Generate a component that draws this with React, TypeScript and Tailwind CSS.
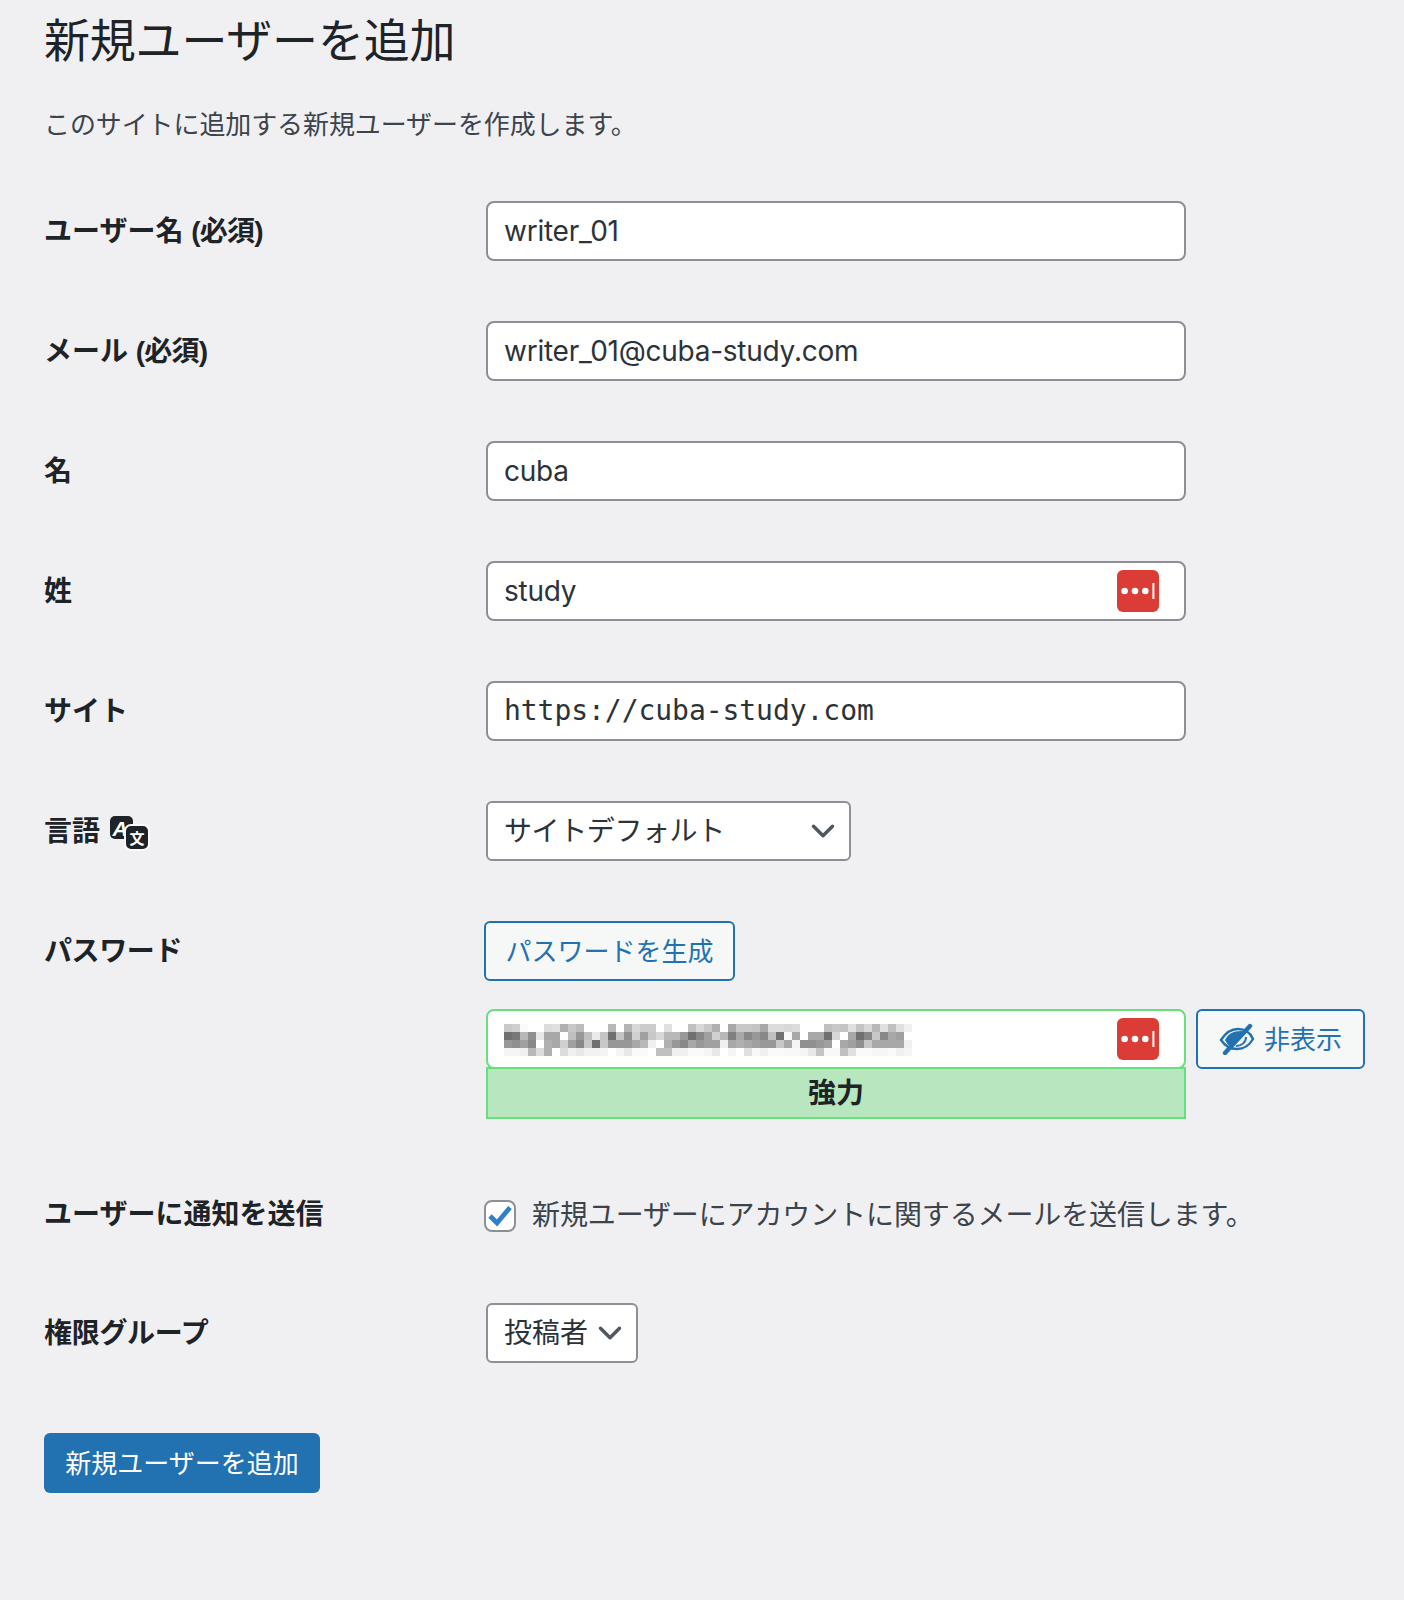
import type { ReactNode } from "react";
import { ChevronDown } from "lucide-react";

// blurred password: gray levels of the mosaic, 4 rows of 51 cells
const mosaic = [
  "c9 cf fa ff ff dc e0 b0 c8 bc ff ff ff b8 ff b4 d8 cc cc ff e0 ff ff c0 d8 c8 b0 ff a8 c8 c8 c4 a8 dc dc d8 dc ff ff ff c0 c8 c4 e0 c4 d8 b8 e0 c0 e0 f0",
  "70 78 b8 90 e8 a8 a8 ff c0 98 c0 ea c4 70 c4 90 d0 a0 c8 d8 b8 b8 98 70 88 a0 d0 b8 80 a8 88 98 88 c0 70 f8 a8 ff a8 a8 70 d8 ff a8 70 88 c8 88 a8 a0 ff",
  "98 90 a0 88 ff b0 a8 d0 a0 88 c8 70 c8 98 98 98 a8 b8 f0 ff b0 98 88 a8 98 a0 a0 f0 a8 b0 a8 a0 98 98 c8 a8 f4 90 90 98 a0 ff a8 a0 90 c8 a8 a8 a8 a8 f0",
  "f5 f5 f0 b8 dc b0 ff dc f0 e8 f2 f2 f4 ff f5 e8 fa fa ff c0 c0 f0 f0 fa fa f5 e8 ff f5 ff e0 f8 f0 fa fa f8 f8 f5 e8 c4 f8 f8 c0 e0 fa fa f6 f6 fa f0 f5",
];

function BlurredPassword() {
  return (
    <div className="flex flex-col mt-[2px]">
      {mosaic.map((row, i) => (
        <div key={i} className="flex">
          {row.split(" ").map((shade, j) => (
            <div key={j} className="w-[8px] h-[8px]" style={{ background: `#${shade}${shade}${shade}` }} />
          ))}
        </div>
      ))}
    </div>
  );
}

function ManagerIcon() {
  return (
    <svg width="42" height="42" viewBox="0 0 42 42">
      <rect width="42" height="42" rx="6" fill="#dc3c36" />
      <circle cx="7.6" cy="21" r="3.3" fill="#fff" />
      <circle cx="18" cy="21" r="3.3" fill="#fff" />
      <circle cx="28.3" cy="21" r="3.3" fill="#fff" />
      <rect x="35.4" y="13" width="2" height="16" fill="#fff" />
    </svg>
  );
}

function TranslateIcon() {
  return (
    <svg width="40" height="36" viewBox="0 0 40 36" className="ml-[10px] mt-[4px]">
      <rect x="0" y="0" width="23" height="23" rx="5" fill="#1d2327" />
      <text x="10" y="20" textAnchor="middle" fontSize="21" fontWeight="700" fontStyle="italic" fill="#fff" fontFamily="Liberation Sans, sans-serif">
        A
      </text>
      <rect x="15" y="9" width="24" height="25" rx="6" fill="#1d2327" stroke="#fafafa" strokeWidth="2" />
      <text x="27" y="28" textAnchor="middle" fontSize="15" fontWeight="700" fill="#fff" fontFamily="Noto Sans CJK JP, sans-serif">
        文
      </text>
    </svg>
  );
}

function HiddenIcon() {
  return (
    <svg width="36" height="32" viewBox="0 0 36 32" fill="none">
      <path d="M2 17 C7 9 13 6 19 6 C25 6 31 9 34 16 C30 23 24 26 18 26 C12 26 6 23 2 17Z" stroke="#2271b1" strokeWidth="2.4" />
      <path d="M6 17 C9 11 14 8 22 8 L25 9 L11 24 C9 22 7 19 6 17Z" fill="#2271b1" />
      <path d="M27 14 C27 19 23 23 17 23" stroke="#2271b1" strokeWidth="2" />
      <path d="M6 30 L31 3" stroke="#2271b1" strokeWidth="4.4" strokeLinecap="round" />
    </svg>
  );
}

function Field({ value, mono, manager }: { value: string; mono?: boolean; manager?: boolean }) {
  return (
    <div className="h-[60px] w-[700px] rounded-[8px] border-2 border-[#8c8f94] bg-white pl-[16px] pr-[25px] flex items-center justify-between text-[28px] text-[#2c3338]">
      <span className={mono ? "font-['DejaVu_Sans_Mono',monospace] tracking-[-0.05px]" : "tracking-[-0.25px]"}>{value}</span>
      {manager && <ManagerIcon />}
    </div>
  );
}

function SelectBox({ value, className }: { value: string; className: string }) {
  return (
    <div className={`${className} h-[60px] rounded-[6px] border-2 border-[#8c8f94] bg-white pl-[16px] pr-[7px] flex items-center justify-between text-[28px] text-[#2c3338]`}>
      <span>{value}</span>
      <ChevronDown className="w-[38px] h-[38px] text-[#50575e]" strokeWidth={2.2} />
    </div>
  );
}

function Label({ children, className = "pt-[2px]" }: { children: ReactNode; className?: string }) {
  return (
    <div className={`${className} w-[442px] shrink-0 flex items-center text-[28px] font-bold text-[#1d2327] font-['Liberation_Sans','Noto_Sans_CJK_JP',sans-serif]`}>
      {children}
    </div>
  );
}

function Row({ label, children }: { label: ReactNode; children: ReactNode }) {
  return (
    <div className="flex items-center h-[60px] mb-[60px]">
      <Label>{label}</Label>
      {children}
    </div>
  );
}

export default function App() {
  return (
    <div className="min-h-[1600px] bg-[#f0f0f2] pl-[44px] font-['Inter','Noto_Sans_CJK_JP',sans-serif] text-[#3c434a]">
      <h1 className="pt-[9px] text-[46px] leading-[62px] tracking-[-0.2px] text-[#1d2327]">新規ユーザーを追加</h1>
      <p className="mt-[36px] text-[26px] leading-[36px] tracking-[-0.1px]">このサイトに追加する新規ユーザーを作成します。</p>

      <div className="mt-[58px]">
        <Row label={<span className="whitespace-pre">ユーザー名 <span className="tracking-[-0.8px]">(必須)</span></span>}><Field value="writer_01" /></Row>
        <Row label={<span className="whitespace-pre">メール <span className="tracking-[-0.8px]">(必須)</span></span>}><Field value="writer_01@cuba-study.com" /></Row>
        <Row label="名"><Field value="cuba" /></Row>
        <Row label="姓"><Field value="study" manager /></Row>
        <Row label="サイト"><Field value="https://cuba-study.com" mono /></Row>
        <Row label={<><span>言語</span><TranslateIcon /></>}>
          <SelectBox value="サイトデフォルト" className="w-[365px] tracking-[-0.4px]" />
        </Row>

        {/* Password */}
        <div className="flex">
          <div className="h-[60px] flex items-center">
            <Label><span className="tracking-[-0.4px]">パスワード</span></Label>
          </div>
          <div>
            <button className="-ml-[2px] h-[60px] w-[251px] rounded-[6px] border-2 border-[#2271b1] bg-[#f6f7f7] text-[26px] text-[#2271b1]">
              パスワードを生成
            </button>
            <div className="mt-[28px] flex gap-[10px] items-start">
              <div className="w-[700px]">
                <div className="relative z-10 h-[60px] rounded-[8px] border-2 border-[#68de7c] bg-white pl-[16px] pr-[25px] flex items-center justify-between">
                  <BlurredPassword />
                  <ManagerIcon />
                </div>
                <div className="-mt-[2px] h-[52px] border-2 border-[#68de7c] bg-[#b8e6bf] flex items-center justify-center text-[28px] font-bold text-[#1d2327]">
                  強力
                </div>
              </div>
              <button className="h-[60px] w-[169px] rounded-[6px] border-2 border-[#2271b1] bg-[#f6f7f7] flex items-center justify-center gap-[9px] text-[26px] text-[#2271b1]">
                <HiddenIcon />
                <span>非表示</span>
              </button>
            </div>
          </div>
        </div>

        {/* Notification */}
        <div className="mt-[81px] flex items-center h-[32px]">
          <Label className="pb-[2px]">ユーザーに通知を送信</Label>
          <div className="-ml-[2px] w-[32px] h-[32px] rounded-[8px] border-2 border-[#8c8f94] bg-white flex items-center justify-center">
            <svg width="26" height="22" viewBox="0 0 26 22" fill="none">
              <path d="M3 11 L10 18 L23 2.5" stroke="#2f7fc9" strokeWidth="4.8" />
            </svg>
          </div>
          <span className="ml-[16px] text-[28px] -mt-[2px] tracking-[-0.12px]">新規ユーザーにアカウントに関するメールを送信します。</span>
        </div>

        <div className="mt-[71px] flex items-center h-[60px]">
          <Label><span className="tracking-[-0.3px]">権限グループ</span></Label>
          <SelectBox value="投稿者" className="w-[152px]" />
        </div>

        <button className="mt-[70px] h-[60px] w-[276px] rounded-[6px] bg-[#2271b1] text-[26px] text-white">
          新規ユーザーを追加
        </button>
      </div>
    </div>
  );
}
